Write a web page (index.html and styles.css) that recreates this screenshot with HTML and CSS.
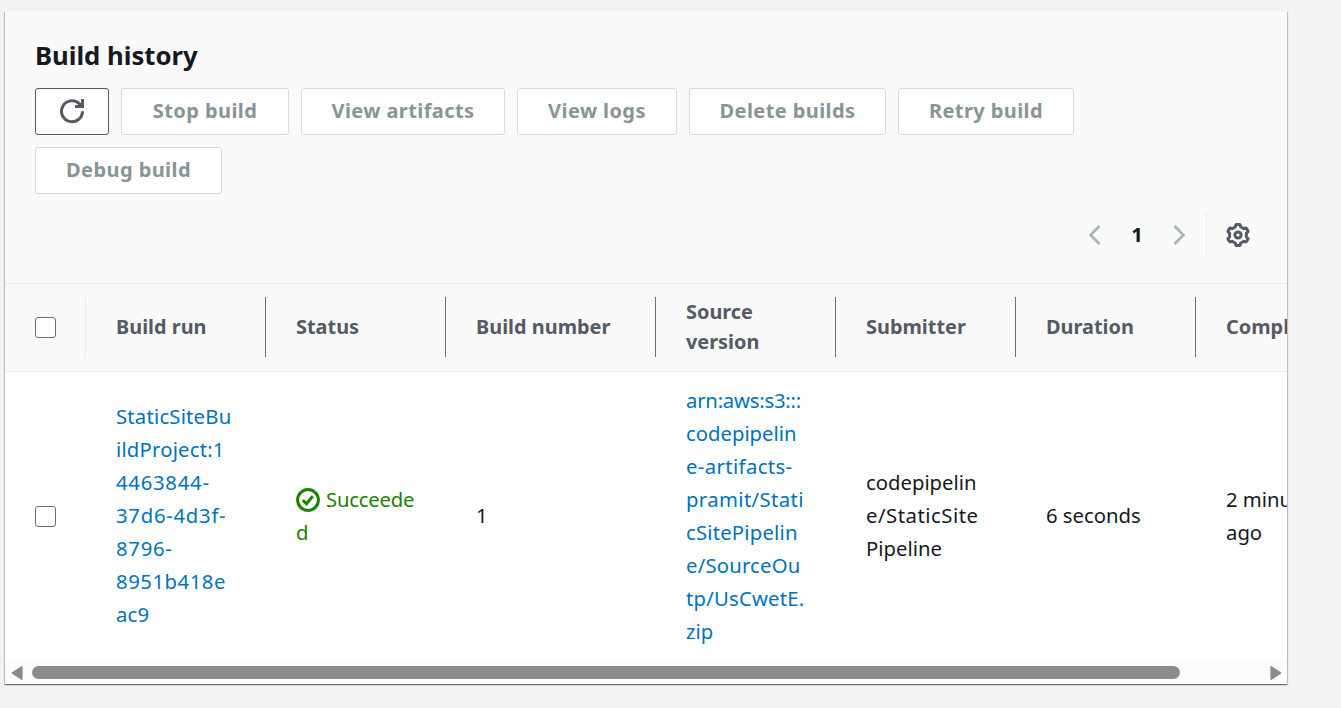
FILE: index.html
```html
<!DOCTYPE html>
<html lang="en">
<head>
<meta charset="utf-8">
<title>Build history</title>
<link rel="stylesheet" href="styles.css">
</head>
<body>
<section class="panel">
  <header class="panel-header">
    <h2 class="title"><span>Build history</span></h2>
    <div class="actions">
      <button class="btn btn-refresh" aria-label="Refresh">
        <svg width="26" height="26" viewBox="0 0 26 26" fill="none" stroke="#545b64" stroke-width="3"><path d="M23.5 13.2A10.5 10.5 0 1 1 20.2 5.6L22 7.4"/><path d="M23.5 1v7.5H16"/></svg>
      </button>
      <button class="btn w-stop"><span>Stop build</span></button>
      <button class="btn w-artifacts"><span>View artifacts</span></button>
      <button class="btn w-logs"><span>View logs</span></button>
      <button class="btn w-delete"><span>Delete builds</span></button>
      <button class="btn w-retry"><span>Retry build</span></button>
      <button class="btn w-debug"><span>Debug build</span></button>
    </div>
    <div class="pager">
      <svg class="chevron" width="13" height="20" viewBox="0 0 13 20" fill="none" stroke="#aab7b8" stroke-width="2.8"><path d="M11.5 1L2.5 10l9 9"/></svg>
      <span class="page">1</span>
      <svg class="chevron" width="13" height="20" viewBox="0 0 13 20" fill="none" stroke="#aab7b8" stroke-width="2.8"><path d="M1.5 1l9 9-9 9"/></svg>
      <span class="divider"></span>
      <svg class="gear" width="24" height="24" viewBox="0 0 24 24" fill="none" stroke="#545b64" stroke-width="3" stroke-linejoin="round"><path d="M10.6 1.5H13.4Q14.5 1.6 14.5 3.8L17.87 5.71Q19.8 4.6 20.6 5.6L21.9 7.9Q22.4 9 20.38 10.07V13.93Q22.4 15 21.9 16.1L20.6 18.4Q19.8 19.4 17.87 18.29L14.5 20.2Q14.5 22.4 13.4 22.5H10.6Q9.5 22.4 9.5 20.2L6.13 18.29Q4.2 19.4 3.4 18.4L2.1 16.1Q1.6 15 3.62 13.93V10.07Q1.6 9 2.1 7.9L3.4 5.6Q4.2 4.6 6.13 5.71L9.5 3.8Q9.5 1.6 10.6 1.5Z"/><circle cx="12" cy="12" r="3.1"/></svg>
    </div>
  </header>
  <div class="grid head">
    <div class="cell check"><span class="box"></span></div>
    <div class="cell"><span>Build run</span></div>
    <div class="cell"><span>Status</span></div>
    <div class="cell"><span>Build number</span></div>
    <div class="cell"><span>Source<br>version</span></div>
    <div class="cell"><span>Submitter</span></div>
    <div class="cell"><span>Duration</span></div>
    <div class="cell"><span>Completed</span></div>
  </div>
  <div class="grid row">
    <div class="cell check"><span class="box"></span></div>
    <div class="cell link"><span class="text"><span class="sp1">StaticSiteBu</span><br><span class="sp1">ildProject:1</span><br><span class="sp4">4463844-</span><br><span class="sp4">37d6-4d3f-</span><br><span class="sp4">8796-</span><br><span class="sp3">8951b418e</span><br><span class="sp1">ac9</span></span></div>
    <div class="cell ok"><span class="text status"><svg width="24" height="24" viewBox="0 0 24 24" fill="none" stroke="#1d8102" stroke-width="3"><circle cx="12" cy="12" r="10.4"/><path d="M6.8 12.2l3.7 3.6 6.2-7.6"/></svg><span class="tight">Succeede</span><br>d</span></div>
    <div class="cell"><span class="text">1</span></div>
    <div class="cell link"><span class="text"><span class="tight">arn:aws:s3:::</span><br>codepipelin<br><span class="sp2">e-artifacts-</span><br><span class="sp2">pramit/Stati</span><br><span class="sp1">cSitePipelin</span><br><span class="sp1">e/SourceOu</span><br><span class="sp1">tp/UsCwetE.</span><br>zip</span></div>
    <div class="cell"><span class="text">codepipelin<br><span class="sp3">e/StaticSite</span><br>Pipeline</span></div>
    <div class="cell"><span class="text">6 seconds</span></div>
    <div class="cell"><span class="text">2 minutes<br>ago</span></div>
  </div>
  <div class="scrollbar">
    <svg width="12" height="16" viewBox="0 0 12 16"><path d="M10.8 1.8v12.4L1.5 8z" fill="#8b8b8b" stroke="#8b8b8b" stroke-width="1.6" stroke-linejoin="round"/></svg>
    <span class="track"><span class="thumb"></span></span>
    <svg width="12" height="16" viewBox="0 0 12 16"><path d="M1.2 1.8v12.4L10.5 8z" fill="#8b8b8b" stroke="#8b8b8b" stroke-width="1.6" stroke-linejoin="round"/></svg>
  </div>
</section>
</body>
</html>
```
FILE: styles.css
```css
* { box-sizing: border-box; }
body {
  margin: 0;
  height: 708px;
  padding: 11px 0 0 5px;
  overflow: hidden;
  background: #f2f3f3;
  color: #16191f;
  font: 20.3px/33px "Noto Sans", sans-serif;
}
.panel {
  width: 1282px;
  height: 673px;
  background: #fff;
  overflow: hidden;
  box-shadow: 0 1px 1px 0 rgba(0, 28, 36, .4), 1px 1px 1px 0 rgba(0, 28, 36, .18), -1px 1px 1px 0 rgba(0, 28, 36, .18);
}
.panel-header {
  height: 273px;
  padding: 28px 30px 0;
  background: #fafafa;
  border-bottom: 1px solid #eaeded;
}
.title {
  margin: 0;
  height: 49px;
  font-size: 25.7px;
  line-height: 34px;
  font-weight: 700;
}
.actions { display: flex; flex-wrap: wrap; gap: 12px; width: 1160px; }
.btn {
  height: 47px;
  padding: 0 0 2px;
  border: 1px solid #d5dbdb;
  border-radius: 3px;
  background: #fff;
  color: #879596;
  font: 700 20px/30px "Noto Sans", sans-serif;
  letter-spacing: .42px;
  white-space: nowrap;
}
.btn-refresh { width: 74px; border-color: #545b64; display: grid; place-items: center; padding: 0 0 2px; }
.w-stop { width: 168px; }
.w-artifacts { width: 204px; }
.w-logs { width: 160px; }
.w-delete { width: 197px; }
.w-retry { width: 176px; }
.w-debug { width: 187px; }
.pager {
  display: flex;
  align-items: center;
  justify-content: flex-end;
  height: 46px;
  margin: 18px 7px 0 0;
}
.page { width: 72px; padding: 0 0 2px; text-align: center; font-weight: 700; }
.divider { width: 1px; height: 46px; margin: 0 19px 0 20px; background: #eaeded; }
.grid { display: grid; grid-template-columns: 80px 180px 180px 210px 180px 180px 180px 180px; }
.cell { display: flex; align-items: center; padding-left: 31px; white-space: nowrap; }
.cell.check { padding-left: 30px; }
.box { width: 21px; height: 21px; border: 1.5px solid #687078; border-radius: 3px; background: #fff; }
.head {
  height: 88px;
  padding: 13px 0 14px;
  background: #fafafa;
  border-bottom: 1px solid #eaeded;
  color: #545b64;
  font-size: 19.9px;
  line-height: 30px;
  font-weight: 700;
}
.head .cell { border-right: 1px solid #687078; margin-right: -1px; }
.head .check { border-color: #eaeded; }
.row { height: 289px; }
.text { padding-bottom: 2px; display: block; }
.sp1 { letter-spacing: .2px; }
.sp2 { letter-spacing: .38px; }
.sp3 { letter-spacing: .53px; }
.sp4 { letter-spacing: .74px; }
.tight { letter-spacing: -.22px; }
.link { color: #0073bb; }
.ok { color: #1d8102; }
.status svg { vertical-align: -5px; margin-right: 6px; }
.scrollbar {
  display: flex;
  align-items: center;
  height: 23px;
  padding: 0 5px 0 6px;
  background: #fcfcfc;
}
.track { flex: 1; padding: 0 90px 0 9px; }
.thumb { display: block; height: 13px; border-radius: 7px; background: #8b8b8b; }
```
